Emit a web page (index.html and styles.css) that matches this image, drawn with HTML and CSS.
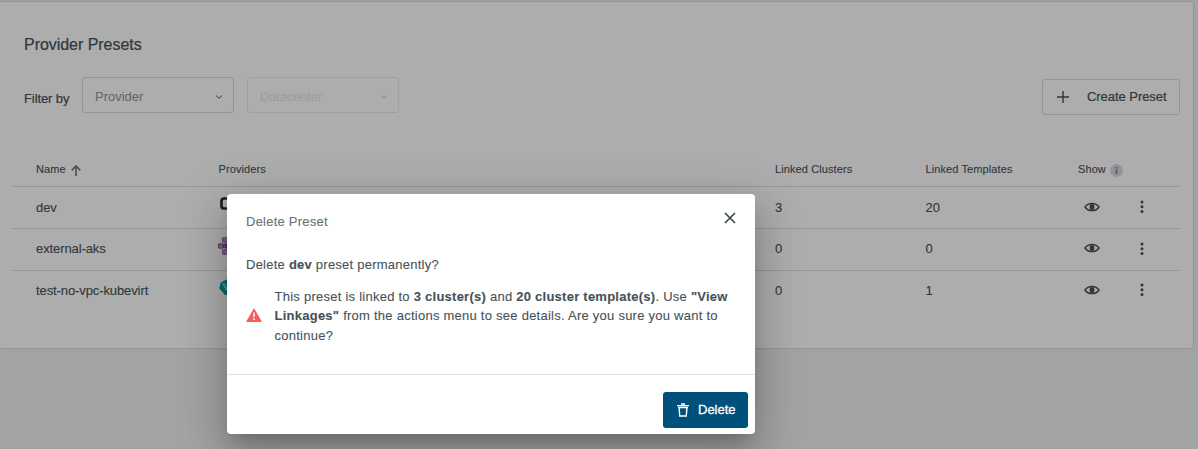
FILE: index.html
```html
<!DOCTYPE html>
<html lang="en">
<head>
<meta charset="utf-8">
<title>Provider Presets</title>
<link rel="stylesheet" href="styles.css">
</head>
<body>
<svg class="defs" width="0" height="0">
  <symbol id="eye" viewBox="0 0 16 10"><path d="M1 5C4.300.2 11.700.2 15 5C11.700 9.800 4.300 9.800 1 5Z" fill="none" stroke="currentColor" stroke-width="1.500"/><ellipse cx="8" cy="5" rx="2.400" ry="3" fill="currentColor"/></symbol>
  <symbol id="dots" viewBox="0 0 4 14"><circle cx="2" cy="2" r="1.500" fill="currentColor"/><circle cx="2" cy="6.700" r="1.500" fill="currentColor"/><circle cx="2" cy="11.400" r="1.500" fill="currentColor"/></symbol>
  <symbol id="chevron" viewBox="0 0 8 6"><path d="M1 1.500L4 4.300L7 1.500" fill="none" stroke="currentColor" stroke-width="1"/></symbol>
</svg>
<main class="card">
  <h1 class="title">Provider Presets</h1>
  <div class="toolbar">
    <span class="filter-label">Filter by</span>
    <div class="select"><span>Provider</span><svg class="chevron"><use href="#chevron"/></svg></div>
    <div class="select disabled"><span>Datacenter</span><svg class="chevron"><use href="#chevron"/></svg></div>
    <button class="create"><svg width="12" height="12" viewBox="0 0 12 12"><path d="M6 0V12M0 6H12" stroke="currentColor" stroke-width="1.400"/></svg><span>Create Preset</span></button>
  </div>
  <div class="table">
    <div class="row head">
      <span class="name">Name <svg class="sort" width="10" height="11" viewBox="0 0 10 11"><path d="M5 11V1M.7 5.300L5 1L9.300 5.300" fill="none" stroke="currentColor" stroke-width="1.700"/></svg></span>
      <span>Providers</span><span>Linked Clusters</span><span>Linked Templates</span>
      <span class="show">Show <svg class="info" width="13" height="13" viewBox="0 0 13 13"><circle cx="6.500" cy="6.500" r="6.500" fill="#d6dadd"/><path d="M5.600 3H7.400V4.500H5.600ZM5.600 5.500H7.400V10H5.600Z" fill="#7c868c"/></svg></span><span></span>
    </div>
    <div class="row">
      <span>dev</span>
      <span class="logo"><svg width="18" height="18" viewBox="0 0 18 18"><path d="M14 6V5Q14 3.500 12 3.500H5Q2.500 3.500 2.500 6V11Q2.500 13.500 5 13.500H12Q14 13.500 14 12V11" fill="none" stroke="#292f34" stroke-width="2.700"/></svg></span>
      <span>3</span><span>20</span>
      <span><svg class="eye"><use href="#eye"/></svg></span><span><svg class="dots"><use href="#dots"/></svg></span>
    </div>
    <div class="row second">
      <span>external-aks</span>
      <span class="logo"><svg class="aks" width="22" height="18" viewBox="0 0 22 18"><g fill="#b88bc9" stroke="#804c98" stroke-width=".8"><path d="M4.500 1L7 .5L9.500 1V5L7 5.500L4.500 5ZM10.500 1L13 .5L15.500 1V5L13 5.500L10.500 5ZM.5 7L3 6.500L5.500 7V11L3 11.500L.5 11ZM6.500 7L9 6.500L11.500 7V11L9 11.500L6.500 11ZM12.500 7L15 6.500L17.500 7V11L15 11.500L12.500 11ZM4.500 13L7 12.500L9.500 13V17L7 17.500L4.500 17ZM10.500 13L13 12.500L15.500 13V17L13 17.500L10.500 17Z"/></g><path d="M4.500 7H5.500V11H4.500ZM7 7H9V11H7Z" fill="#703c88" opacity=".8"/></svg></span>
      <span>0</span><span>0</span>
      <span><svg class="eye"><use href="#eye"/></svg></span><span><svg class="dots"><use href="#dots"/></svg></span>
    </div>
    <div class="row third">
      <span>test-no-vpc-kubevirt</span>
      <span class="logo"><svg width="17" height="18" viewBox="0 0 17 18"><path d="M8.500 1L15 4L16.500 11L12 17H6L.3 10.500L1.700 4.500Z" fill="#00a1a1"/><path d="M3.500 5L7 12L10 5M5 5L7.500 10" fill="none" stroke="#d0f0f0" stroke-width=".8"/></svg></span>
      <span>0</span><span>1</span>
      <span><svg class="eye"><use href="#eye"/></svg></span><span><svg class="dots"><use href="#dots"/></svg></span>
    </div>
  </div>
</main>
<div class="backdrop">
  <section class="dialog" role="dialog">
    <header class="dialog-head"><h2>Delete Preset</h2><svg class="close" width="12" height="12" viewBox="0 0 12 12"><path d="M1 1L11 11M11 1L1 11" stroke="currentColor" stroke-width="1.700"/></svg></header>
    <div class="dialog-body">
      <p>Delete <b>dev</b> preset permanently?</p>
      <div class="warning">
        <svg width="16" height="14" viewBox="0 0 16 14"><path d="M8 0L16 14H0Z" fill="#f75c5c"/><path d="M8 4.500V9M8 10.300V12" stroke="#fff" stroke-width="1.500"/></svg>
        <p>This preset is linked to <b>3 cluster(s)</b> and <b>20 cluster template(s)</b>. Use <b>"View<br>Linkages"</b> from the actions menu to see details. Are you sure you want to<br>continue?</p>
      </div>
    </div>
    <footer class="dialog-foot"><button class="delete"><svg width="12" height="14" viewBox="0 0 12 14"><path d="M0 2.600H12M4 1H8M1 4.500H11M2.100 4.500L2.700 13H9.300L9.900 4.500" fill="none" stroke="#fff" stroke-width="1.400"/></svg><span>Delete</span></button></footer>
  </section>
</div>
</body>
</html>
```
FILE: styles.css
```css
* { box-sizing: border-box; }
body { margin: 0; height: 449px; overflow: hidden; background: #edf0f2; color: #46525a; font: 13px/18px "Liberation Sans", Arial, sans-serif; }
h1, h2, p { margin: 0; font-weight: normal; }
button { font: inherit; color: inherit; background: none; }
svg { display: block; flex: none; }
.defs { position: absolute; }
.card { margin-top: 2px; width: 1193px; height: 346px; padding: 32px 13px 0 12px; background: #fff; border-radius: 0 2px 2px 0; box-shadow: 0 0 2px rgba(0,0,0,.3); }
.title { margin-left: 12px; font-size: 16px; line-height: 22px; letter-spacing: -.04px; -webkit-text-stroke: .2px; }
.toolbar { display: flex; align-items: flex-start; height: 74px; margin: 21px 0 0 12px; }
.filter-label { width: 58px; margin-top: 13px; letter-spacing: -.1px; -webkit-text-stroke: .2px; }
.select { display: flex; align-items: center; justify-content: space-between; width: 152px; height: 36px; margin-right: 13px; padding: 3px 10px 0 12px; border: 1px solid #d9dbdc; border-radius: 3px; color: #8d959a; }
.chevron { width: 8px; height: 6px; color: #4d565c; }
.disabled { color: #e4e7e8; border-color: #e9ebec; letter-spacing: -.15px; }
.disabled .chevron { color: #bcc1c4; }
.create { display: flex; align-items: center; width: 138px; height: 36px; margin: 2px 0 0 auto; padding: 0 0 0 14px; gap: 18px; border: 1px solid #d9dbdc; border-radius: 3px; letter-spacing: -.05px; -webkit-text-stroke: .2px; }
.row { display: grid; grid-template-columns: 182.500px 556.500px 150.500px 152.500px 57px 1fr; height: 42px; padding-left: 24px; border-bottom: 1px solid #dadddd; padding-top: 12px; align-items: start; letter-spacing: -.1px; -webkit-text-stroke: .1px; }
.second, .third { padding-top: 11px; }
.row:last-child { border: 0; }
.head { height: 36px; padding-top: 9px; font-size: 11px; letter-spacing: .1px; }
.name, .show { display: flex; gap: 5px; }
.show { gap: 4px; }
.sort { margin-top: 5px; color: #737c82; }
.info { margin-top: 4px; }
.logo { margin-top: -4px; }
.second .logo { margin-top: -3px; }
.aks { margin-left: -1px; }
.eye { width: 16px; height: 10px; margin: 2.500px 0 0 5.500px; }
.dots { width: 4px; height: 14px; margin: 1px 0 0 5px; }
.second .dots { margin-top: 2px; }
.backdrop { position: absolute; inset: 0; background: rgba(0,0,0,.32); padding: 194px 0 0 227px; }
.dialog { width: 528px; height: 240px; background: #fff; border-radius: 4px; box-shadow: 0 11px 15px -7px rgba(0,0,0,.2), 0 24px 38px 3px rgba(0,0,0,.14), 0 9px 46px 8px rgba(0,0,0,.12); letter-spacing: .24px; -webkit-text-stroke: .1px; }
.dialog-head { display: flex; justify-content: space-between; height: 62px; padding: 18px 19px 0; }
.dialog-head h2 { margin-top: 1px; font-size: 13px; color: #687279; }
.close { color: #3d4950; }
.dialog-body { height: 118px; padding: 0 19px; }
.warning { display: flex; align-items: center; gap: 12.500px; margin-top: 12.700px; line-height: 19.500px; white-space: nowrap; letter-spacing: .25px; }
.warning svg { margin-top: -1.500px; }
.dialog-foot { height: 60px; padding: 17px 7px 0; border-top: 1px solid #dfe2e3; display: flex; justify-content: flex-end; }
.delete { display: flex; align-items: center; gap: 9px; width: 85px; height: 36px; padding: 0 0 0 14px; border: 0; border-radius: 3px; background: #00507c; color: #fff; -webkit-text-stroke: .3px; }
```
